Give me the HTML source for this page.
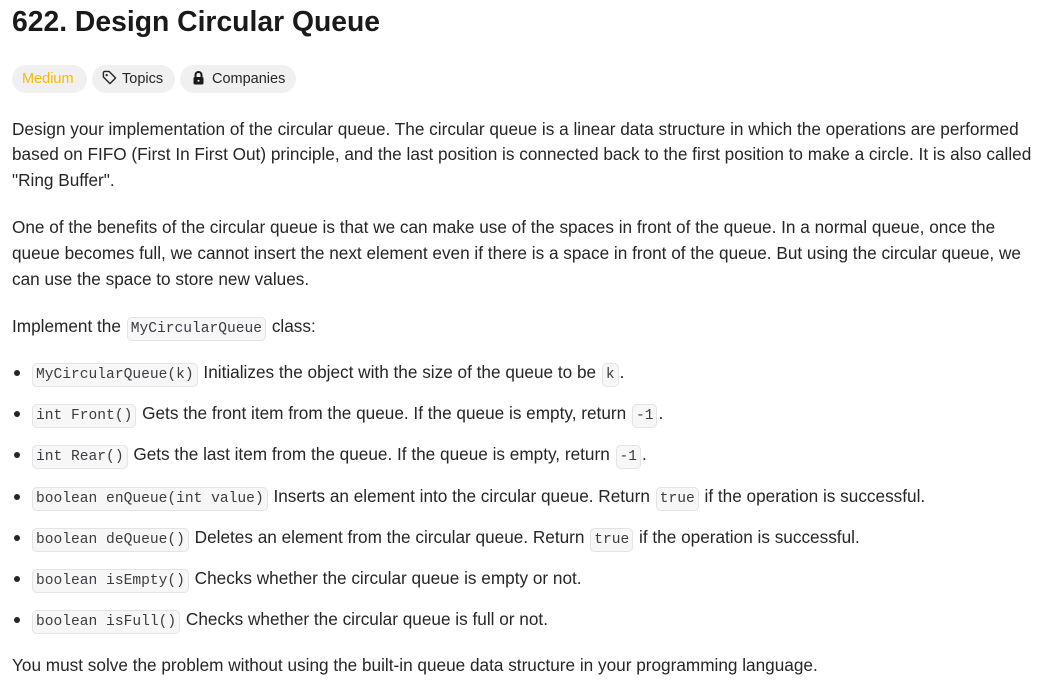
<!DOCTYPE html>
<html><head><meta charset="utf-8"><style>
body{margin:0;background:#fff;font-family:"Liberation Sans",sans-serif;color:#262626;}
h1{position:absolute;left:12px;top:5px;margin:0;font-size:28.3px;font-weight:bold;color:#1a1a1a;white-space:nowrap}
.b{position:absolute;top:65px;height:28px;border-radius:14px;background:#f0f0f0;font-size:14.5px;line-height:28px;padding:0 10px;box-sizing:border-box;color:#262626;white-space:nowrap}
.l{position:absolute;left:12px;font-size:17.2px;white-space:nowrap;line-height:20px}
code{font-family:"Liberation Mono",monospace;font-size:14.6px;background:#f7f7f8;border:1px solid #e4e4e4;border-radius:5px;padding:3px 3px;margin:0 1px;color:#3c3c43}
.d{position:absolute;left:14px;width:6px;height:6px;border-radius:3px;background:#262626}
</style></head><body>
<h1>622. Design Circular Queue</h1>
<div class="b" style="left:12px;width:75px;color:#ffb800">Medium</div>
<div class="b" style="left:92px;width:83px;padding-left:10px"><svg width="15" height="15" viewBox="0 0 16 16" style="vertical-align:-2px;margin-right:5px"><path d="M1.5 2.5v5l7 7 6-6-7-7h-5z" fill="none" stroke="#262626" stroke-width="1.5" stroke-linejoin="round"/><circle cx="5" cy="5.5" r="1.2" fill="#262626"/></svg>Topics</div>
<div class="b" style="left:180px;width:116px;padding-left:12px"><svg width="13" height="14" viewBox="0 0 13 14" style="vertical-align:-2px;margin-right:7px"><path d="M3.5 6V4a3 3 0 0 1 6 0v2" fill="none" stroke="#1a1a1a" stroke-width="2"/><rect x="1.5" y="6" width="10" height="7.5" rx="1.5" fill="#1a1a1a"/><circle cx="6.5" cy="9.8" r="1" fill="#fff"/></svg>Companies</div>

<div class="l" style="top:119px">Design your implementation of the circular queue. The circular queue is a linear data structure in which the operations are performed</div>
<div class="l" style="top:144px">based on FIFO (First In First Out) principle, and the last position is connected back to the first position to make a circle. It is also called</div>
<div class="l" style="top:170px">"Ring Buffer".</div>
<div class="l" style="top:217px">One of the benefits of the circular queue is that we can make use of the spaces in front of the queue. In a normal queue, once the</div>
<div class="l" style="top:243px">queue becomes full, we cannot insert the next element even if there is a space in front of the queue. But using the circular queue, we</div>
<div class="l" style="top:269px">can use the space to store new values.</div>
<div class="l" style="top:316px">Implement the <code>MyCircularQueue</code> class:</div>

<div class="d" style="top:370px"></div><div class="l" style="left:31px;top:362px"><code>MyCircularQueue(k)</code> Initializes the object with the size of the queue to be <code>k</code>.</div>
<div class="d" style="top:411px"></div><div class="l" style="left:31px;top:403px"><code>int Front()</code> Gets the front item from the queue. If the queue is empty, return <code>-1</code>.</div>
<div class="d" style="top:452px"></div><div class="l" style="left:31px;top:444px"><code>int Rear()</code> Gets the last item from the queue. If the queue is empty, return <code>-1</code>.</div>
<div class="d" style="top:494px"></div><div class="l" style="left:31px;top:486px"><code>boolean enQueue(int value)</code> Inserts an element into the circular queue. Return <code>true</code> if the operation is successful.</div>
<div class="d" style="top:535px"></div><div class="l" style="left:31px;top:527px"><code>boolean deQueue()</code> Deletes an element from the circular queue. Return <code>true</code> if the operation is successful.</div>
<div class="d" style="top:576px"></div><div class="l" style="left:31px;top:568px"><code>boolean isEmpty()</code> Checks whether the circular queue is empty or not.</div>
<div class="d" style="top:617px"></div><div class="l" style="left:31px;top:609px"><code>boolean isFull()</code> Checks whether the circular queue is full or not.</div>
<div class="l" style="top:655px">You must solve the problem without using the built-in queue data structure in your programming language.</div>
</body></html>
